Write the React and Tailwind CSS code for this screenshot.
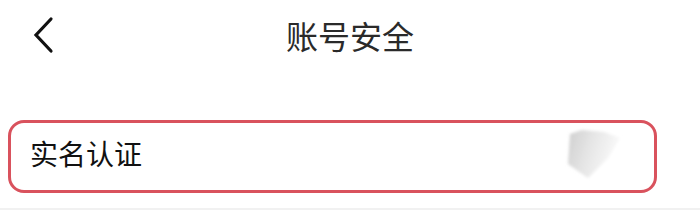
export default function App() {
	return (
		<div
			className="w-[700px] h-[214px] bg-white overflow-hidden"
			style={{ fontFamily: '"Noto Sans CJK SC", "Liberation Sans", sans-serif' }}
		>
			{/* Header */}
			<div className="h-[74px] grid grid-cols-[1fr_auto_1fr] items-center">
				<div className="pl-[32px] pb-[4px]">
					<svg width="24" height="38" viewBox="0 0 24 38" fill="none">
						<path
							d="M19 3 L4 19 L19 35"
							stroke="#111"
							strokeWidth="3.2"
							strokeLinecap="round"
							strokeLinejoin="miter"
						/>
					</svg>
				</div>
				<h1 className="text-[32px] leading-none text-[#2a2a2a] pb-[4px]">账号安全</h1>
				<div />
			</div>

			{/* Row */}
			<div className="mt-[46px] ml-[8px] w-[649px] h-[73px] border-[3.5px] border-[#d9525d] rounded-[16px] flex items-center justify-between pl-[19px] pr-[30px]">
				<span className="text-[28px] leading-none text-[#111] pb-[8px]">实名认证</span>
				<div className="w-[60px] h-[56px] flex items-center justify-center pb-[6px]">
					<svg width="60" height="56" viewBox="0 0 60 56">
						<defs>
							<filter id="smudge" x="-20%" y="-20%" width="140%" height="140%">
								<feGaussianBlur stdDeviation="1.8" />
							</filter>
							<linearGradient id="fade" x1="0" y1="0" x2="1" y2="0.3">
								<stop offset="0" stopColor="#cfcfcf" />
								<stop offset="0.45" stopColor="#e4e4e4" />
								<stop offset="1" stopColor="#fafafa" />
							</linearGradient>
						</defs>
						<path
							d="M6 8 L18 4 L40 6 L56 12 L44 32 L24 52 L4 38 Z"
							fill="url(#fade)"
							filter="url(#smudge)"
						/>
					</svg>
				</div>
			</div>

			<div className="mt-[15px] h-[2px] bg-[#f1f1f1]" />
		</div>
	);
}
